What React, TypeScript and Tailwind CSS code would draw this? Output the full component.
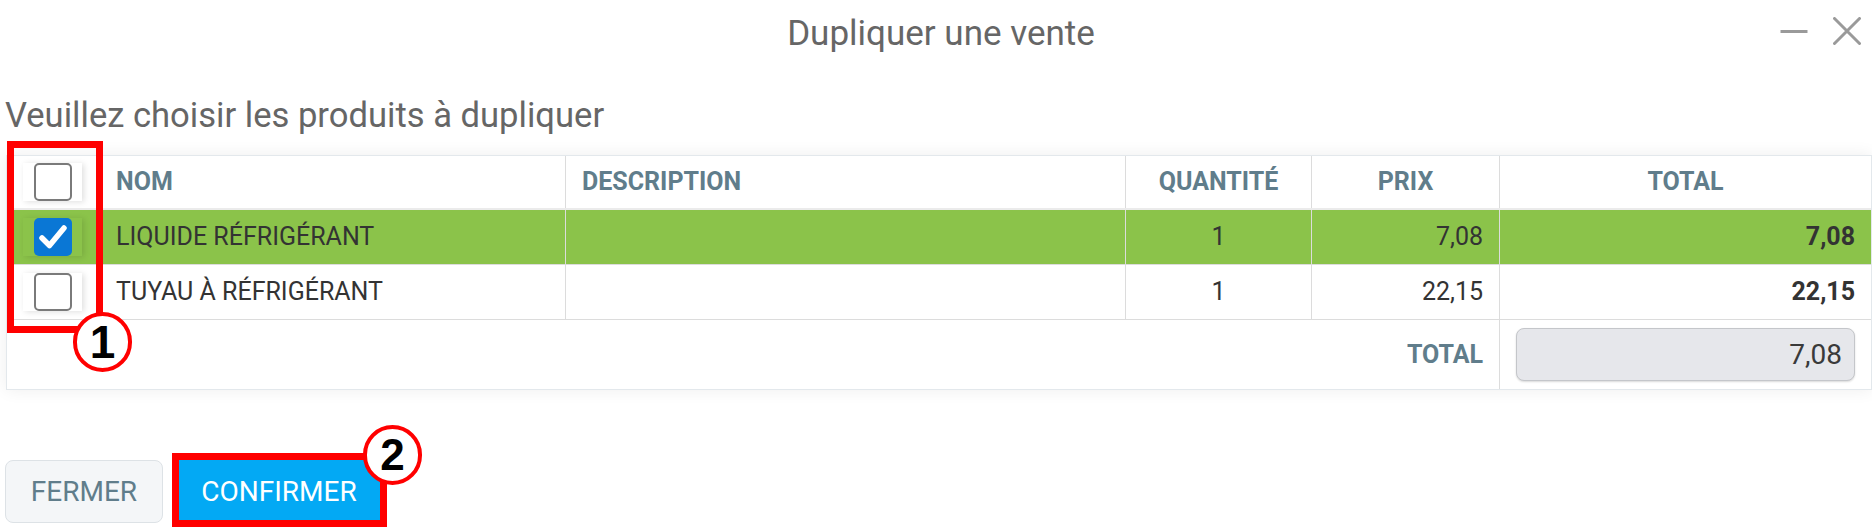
import React from "react";

function Box({ checked }: { checked?: boolean }) {
  return (
    <div className="flex h-[38px] w-[59px] items-center justify-center shadow-[2px_1px_6px_rgba(0,0,0,0.13)]">
      {checked ? (
        <div className="flex h-[38px] w-[38px] items-center justify-center rounded-[5px] bg-[#0a77d5]">
          <svg width="38" height="38" viewBox="0 0 38 38">
            <path d="M8 20 L15.5 27.5 L30 10" fill="none" stroke="#fff" strokeWidth="5.5" strokeLinecap="round" strokeLinejoin="round" />
          </svg>
        </div>
      ) : (
        <div className="h-[38px] w-[38px] rounded-[5px] border-2 border-[#7a7a7a] bg-white" />
      )}
    </div>
  );
}

const cols = "grid grid-cols-[93px_466px_560px_186px_188px_1fr]";
const cell = "flex items-center px-4";
const bR = "border-r border-[#dcdcdc]";

function Row({ checked, name, price, total, bg }: { checked?: boolean; name: string; price: string; total: string; bg: string }) {
  return (
    <div className={`${cols} h-[55px] border-b border-[#dcdcdc] ${bg} text-[25px] text-[#333]`}>
      <div className={cell}>
        <Box checked={checked} />
      </div>
      <div className={`${cell} ${bR}`}>{name}</div>
      <div className={`${cell} ${bR}`}></div>
      <div className={`${cell} ${bR} justify-center`}>1</div>
      <div className={`${cell} ${bR} justify-end`}>{price}</div>
      <div className={`${cell} justify-end font-bold`}>{total}</div>
    </div>
  );
}

export default function App() {
  return (
    <div className="relative h-[530px] w-[1872px] overflow-hidden bg-white font-['Roboto',sans-serif]">
      <div className="pt-[16px]">
        <div className="grid h-[35px] grid-cols-[1fr_auto_1fr] items-center">
          <div />
          <h1 className="ml-[10px] whitespace-nowrap text-[35px] leading-[35px] text-[#666]">Dupliquer une vente</h1>
          <div className="-mt-[6px] flex items-center justify-end gap-[25px] pr-[11px]">
            <svg width="28" height="28" viewBox="0 0 28 28">
              <path d="M0.5 14.5 H27.5" stroke="#9a9a9a" strokeWidth="3" />
            </svg>
            <svg width="28" height="28" viewBox="0 0 28 28">
              <path d="M1.5 1.5 L26.5 26.5 M26.5 1.5 L1.5 26.5" stroke="#9a9a9a" strokeWidth="3" strokeLinecap="round" />
            </svg>
          </div>
        </div>

        <p className="mt-[47px] pl-[5px] text-[34.6px] leading-[35px] text-[#666]">
          Veuillez choisir les produits à dupliquer
        </p>

        <div className="ml-[6px] mt-[22px] border border-[#e3e8ec] bg-white shadow-[0_0_16px_rgba(0,0,0,0.07)]">
          <div className={`${cols} h-[54px] border-b-2 border-[#ebebeb] text-[25px] font-bold text-[#607d8b]`}>
            <div className={cell}>
              <Box />
            </div>
            <div className={`${cell} ${bR}`}>NOM</div>
            <div className={`${cell} ${bR}`}>DESCRIPTION</div>
            <div className={`${cell} ${bR} justify-center`}>QUANTITÉ</div>
            <div className={`${cell} ${bR} justify-center`}>PRIX</div>
            <div className={`${cell} justify-center`}>TOTAL</div>
          </div>
          <Row checked name="LIQUIDE RÉFRIGÉRANT" price="7,08" total="7,08" bg="bg-[#8bc34a]" />
          <Row name="TUYAU À RÉFRIGÉRANT" price="22,15" total="22,15" bg="bg-white" />
          <div className="grid h-[69px] grid-cols-[1493px_1fr]">
            <div className={`${cell} ${bR} justify-end text-[25px] font-bold text-[#607d8b]`}>TOTAL</div>
            <div className="flex items-center px-4">
              <div className="flex h-[53px] w-full items-center justify-end rounded-[8px] border border-[#c4c6ca] bg-[#e6e7eb] pr-[12px] text-[28px] text-[#3a3a3a] shadow-[0_1px_2px_rgba(0,0,0,0.15)]">
                7,08
              </div>
            </div>
          </div>
        </div>

        <div className="ml-[5px] mt-[70px] flex gap-[12px]">
          <button className="h-[63px] w-[158px] rounded-[8px] border border-[#dde2e6] bg-[#f4f6f8] text-[28px] text-[#607d8b]">
            FERMER
          </button>
          <button className="h-[63px] w-[208px] bg-[#03a9f4] text-[28px] text-white">CONFIRMER</button>
        </div>
      </div>

      <div className="absolute left-[7px] top-[141px] h-[192px] w-[96px] border-[7px] border-[#ff0000]" />
      <div className="absolute left-[73px] top-[312px] flex h-[60px] w-[59px] items-center justify-center rounded-full border-[4px] border-[#ff0000] bg-white font-['Liberation_Sans',Arial,sans-serif] text-[46px] font-bold leading-none text-black">
        1
      </div>
      <div className="absolute left-[172px] top-[453px] h-[74px] w-[215px] border-[7px] border-[#ff0000]" />
      <div className="absolute left-[363px] top-[425px] flex h-[60px] w-[59px] items-center justify-center rounded-full border-[4px] border-[#ff0000] bg-white font-['Liberation_Sans',Arial,sans-serif] text-[44px] font-bold leading-none text-black">
        2
      </div>
    </div>
  );
}
